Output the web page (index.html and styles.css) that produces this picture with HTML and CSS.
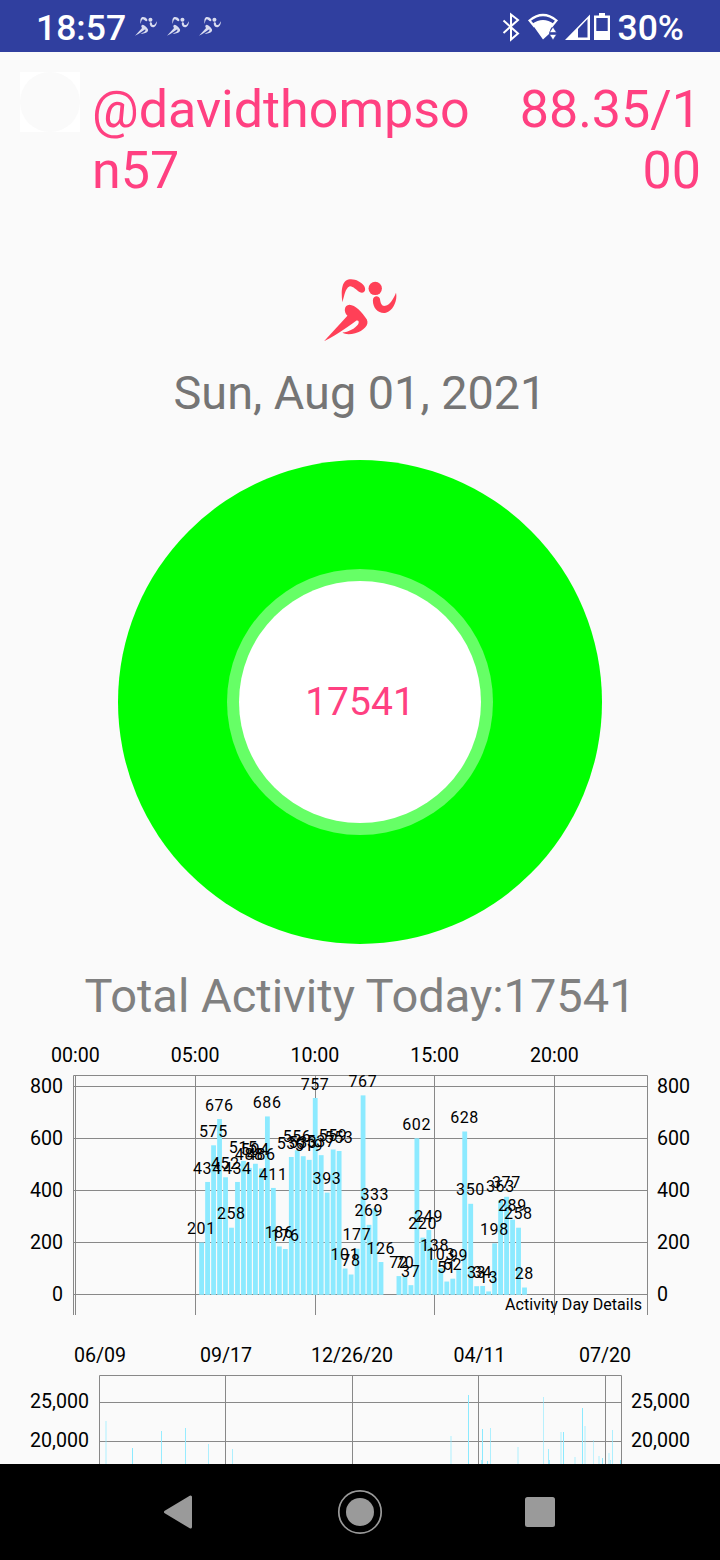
FILE: index.html
```html
<!DOCTYPE html>
<html lang="en">
<head>
<meta charset="utf-8">
<title>Activity</title>
<link rel="stylesheet" href="styles.css">
</head>
<body>
<svg class="defs" aria-hidden="true">
  <symbol id="runner" viewBox="72 57 218 188">
    <path d="M127 126C123 100 124 72 137 62C155 52 180 62 192 78C200 92 190 102 178 96C168 90 158 77 148 79C136 84 133 105 127 126Z"/>
    <circle cx="225" cy="85" r="20"/>
    <path d="M218 122C217 106 236 104 239 116C241 131 245 139 255 137C270 134 280 115 287 98C292 120 280 150 257 158C236 162 218 145 218 122Z"/>
    <path d="M72 243L142 167C130 155 132 135 148 134C165 135 185 155 200 178C208 195 190 212 165 219C150 223 135 223 127 217C145 215 165 205 174 192C178 185 175 179 167 182C150 194 120 217 72 243Z"/>
  </symbol>
</svg>
<div class="screen">
  <header class="status">
    <span class="clock">18:57</span>
    <div class="notices">
      <svg class="notice"><use href="#runner"/></svg>
      <svg class="notice"><use href="#runner"/></svg>
      <svg class="notice"><use href="#runner"/></svg>
    </div>
    <svg class="radios" viewBox="0 0 112 30">
      <path d="M3.5 8.5L18 21.5L11 27.5V2.5L18 8L3.5 21" fill="none" stroke="#fff" stroke-width="2"/>
      <path d="M29.5 8.5Q43 -2.5 56.500 8.500L52 14Q43 6.500 34 14Z" fill="none" stroke="#fff" stroke-width="2.200"/>
      <path d="M32 12Q43 4 54 12L50.500 17L49 22L43 27.500Z" fill="#fff"/>
      <path d="M49.500 20.500L53 15L56.500 20.500ZM49.500 22.500H56.500L53 28Z" fill="#fff" stroke="#303f9f" stroke-width=".6"/>
      <path d="M65 28H90V2.500ZM78 17L87.500 7V25.500H78Z" fill="#fff" fill-rule="evenodd"/>
      <path d="M94 3.500H99V1H105V3.500H110V28H94ZM96.300 6V19H107.700V6Z" fill="#fff" fill-rule="evenodd"/>
    </svg>
    <span class="battery">30%</span>
  </header>
  <main class="content">
    <section class="profile">
      <div class="avatar"><div class="avatar-hole"></div></div>
      <div class="name">@davidthompso<br>n57</div>
      <div class="score">88.35/1<br>00</div>
    </section>
    <svg class="logo"><use href="#runner"/></svg>
    <div class="date">Sun, Aug 01, 2021</div>
    <div class="ring"><div class="halo"><div class="count">17541</div></div></div>
    <div class="total">Total Activity Today:17541</div>
    <svg class="day" id="day" viewBox="0 1036 720 284"></svg>
    <svg class="year" id="year" viewBox="0 1320 720 144"></svg>
  </main>
  <nav class="nav">
    <svg viewBox="0 0 720 96">
      <path d="M165.500 48L190.500 33V63Z" fill="#9a9a9a" stroke="#9a9a9a" stroke-width="3" stroke-linejoin="round"/>
      <circle cx="360" cy="48" r="21.200" fill="none" stroke="#9a9a9a" stroke-width="1.700"/>
      <circle cx="360" cy="48" r="14" fill="#9a9a9a"/>
      <rect x="525" y="33" width="30" height="30" rx="2.500" fill="#9a9a9a"/>
    </svg>
  </nav>
</div>
<script src="charts.js"></script>
</body>
</html>
```
FILE: styles.css
```css
body { margin: 0; font-family: Roboto, sans-serif; background: #fafafa; }
.defs { position: absolute; width: 0; height: 0; }
.screen { width: 720px; height: 1560px; display: flex; flex-direction: column; overflow: hidden; }
.status { height: 52px; box-sizing: border-box; flex: none; background: #303f9f; color: #fff; display: flex; align-items: center; padding: 4px 36px 0; font-size: 35.5px; font-weight: 500; }
.clock { width: 99px; }
.notices { display: flex; gap: 10px; flex: 1; }
.notice { width: 22px; height: 19px; fill: #d9dcf0; margin-top: -4px; }
.radios { width: 112px; height: 30px; margin-right: 6px; margin-top: -3px; }
.content { height: 1412px; flex: none; display: flex; flex-direction: column; align-items: center; }
.profile { width: 680px; height: 227px; flex: none; display: flex; padding-top: 20px; box-sizing: border-box; color: #ff4081; font-size: 52px; line-height: 61px; }
.avatar { width: 60px; height: 60px; background: #fff; margin-right: 12px; }
.avatar-hole { height: 60px; border-radius: 50%; background: #fafafa; }
.name { flex: 1; padding-top: 7px; }
.score { text-align: right; padding-top: 7px; margin-right: -1px; }
.logo { width: 73px; height: 63px; flex: none; fill: #ff4057; }
.date { height: 54px; line-height: 54px; margin-top: 24px; font-size: 46.8px; color: #757575; flex: none; }
.ring { width: 484px; height: 484px; margin-top: 40px; flex: none; border-radius: 50%; background: #0f0; display: flex; align-items: center; justify-content: center; }
.halo { width: 266px; height: 266px; border-radius: 50%; background: #66ff66; display: flex; align-items: center; justify-content: center; }
.count { width: 242px; height: 242px; border-radius: 50%; background: #fff; color: #ff4081; font-size: 39px; line-height: 243px; text-align: center; }
.total { height: 56px; line-height: 56px; margin-top: 24px; margin-bottom: 12px; font-size: 47px; color: #808080; flex: none; }
.day { width: 720px; height: 284px; flex: none; }
.year { width: 720px; height: 144px; flex: none; }
.axis { font-size: 19.6px; fill: #000; }
.value { font-size: 16px; letter-spacing: 0.6px; text-anchor: middle; fill: #000; }
.caption { font-size: 16px; letter-spacing: 0.05px; text-anchor: end; fill: #000; }
.middle { text-anchor: middle; }
.end { text-anchor: end; }
.grid { stroke: #888; stroke-width: 1; fill: none; }
.bar { fill: #8ceaff; }
.nav { height: 96px; flex: none; background: #000; }
.nav svg { display: block; width: 720px; height: 96px; }
```
FILE: charts.js
```js
const NS = "http://www.w3.org/2000/svg";
function add(parent, tag, attrs, text) {
  const el = document.createElementNS(NS, tag);
  for (const k in attrs) el.setAttribute(k, attrs[k]);
  if (text !== undefined) el.textContent = text;
  parent.appendChild(el);
}

// Steps per quarter hour, starting at 05:15.
const steps = [201, 434, 575, 676, 452, 258, 434, 515, 488, 504, 486, 686, 411, 186, 176,
  530, 556, 533, 519, 757, 537, 393, 559, 553, 101, 78, 177, 767, 269, 333, 126, null, null,
  72, 70, 37, 602, 220, 249, 138, 103, 51, 62, 99, 628, 350, 33, 34, 13, 198, 363, 377, 289, 258, 28];
const day = document.getElementById("day");
add(day, "path", { class: "grid", d: "M73.5 1315V1075.5H647.5V1315M75.5 1075V1315M195.5 1075V1315M315.5 1075V1315M434.5 1075V1315M554.5 1075V1315M73 1086.500H647M73 1138.500H647M73 1190.500H647M73 1242.500H647M73 1294.500H647" });
const barX = i => 201.6 + i * 5.98;
steps.forEach((v, i) => {
  if (v !== null) add(day, "rect", { class: "bar", x: barX(i) - 2.4, y: 1294.8 - v * 0.26, width: 4.8, height: v * 0.26 });
});
steps.forEach((v, i) => {
  if (v !== null) add(day, "text", { class: "value", x: barX(i) - 0.2, y: 1286.4 - v * 0.26 }, v);
});
["00:00", "05:00", "10:00", "15:00", "20:00"].forEach((t, i) =>
  add(day, "text", { class: "axis middle", x: 75.5 + i * 119.75, y: 1062.4 }, t));
[800, 600, 400, 200, 0].forEach((t, i) => {
  add(day, "text", { class: "axis end", x: 63, y: 1092.5 + i * 52.2 }, t);
  add(day, "text", { class: "axis", x: 657, y: 1092.5 + i * 52.2 }, t);
});
add(day, "text", { class: "caption", x: 642, y: 1310 }, "Activity Day Details");

// Visible tops of the daily totals: x, top, width, opacity.
const totals = [[105, 1421, 2, .35], [132, 1448, 1, 1], [161, 1431, 1, .9], [185, 1428, 1, .9],
  [208, 1444, 1, .7], [232, 1449, 1, .7], [450, 1436, 2, .35], [468, 1395, 1, 1], [481, 1460, 1, .7],
  [482, 1429, 1, 1], [487, 1461, 1, 1], [490, 1428, 1, .7], [517, 1447, 2, .35], [543, 1397, 1, .6],
  [548, 1449, 1, .8], [549, 1460, 1, .8], [560, 1432, 2, .35], [563, 1432, 1, 1], [574, 1457, 2, .35],
  [582, 1408, 1, 1], [584, 1426, 2, .35], [593, 1440, 1, .5], [598, 1456, 2, .35], [602, 1458, 1, 1],
  [608, 1453, 2, .35], [610, 1460, 1, .6], [612, 1430, 1, .7], [620, 1460, 1, 1]];
const year = document.getElementById("year");
add(year, "path", { class: "grid", d: "M99.500 1464V1375.500H621.500V1464M225.500 1375V1464M352.500 1375V1464M478.500 1375V1464M605.500 1375V1464M99 1402.500H621M99 1441.500H621" });
totals.forEach(([x, y, w, o]) =>
  add(year, "rect", { class: "bar", x, y, width: w, height: 1464 - y, opacity: o }));
[["06/09", 100], ["09/17", 226], ["12/26/20", 352], ["04/11", 479.500], ["07/20", 605]].forEach(([t, x]) =>
  add(year, "text", { class: "axis middle", x, y: 1362.4 }, t));
[["25,000", 1408.200], ["20,000", 1447.200]].forEach(([t, y]) => {
  add(year, "text", { class: "axis end", x: 89, y }, t);
  add(year, "text", { class: "axis", x: 631, y }, t);
});
```
